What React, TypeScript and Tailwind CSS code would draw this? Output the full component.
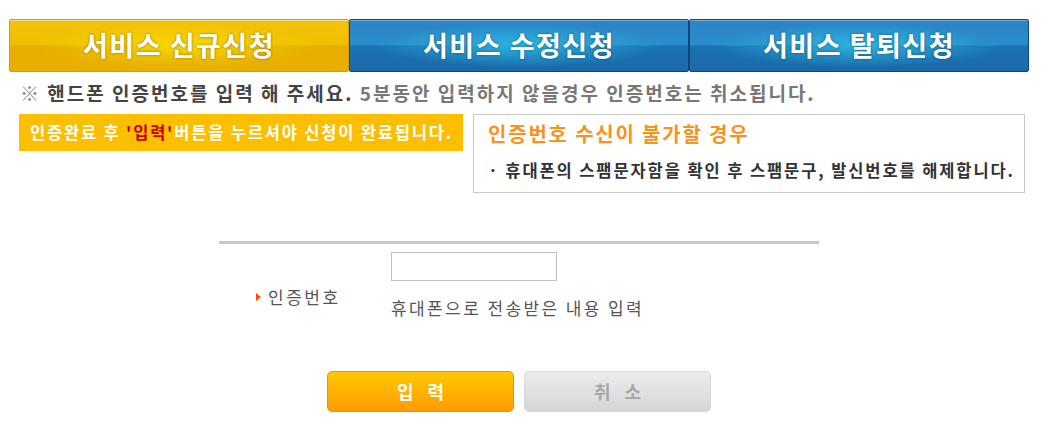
import React from "react";

const font = { fontFamily: '"Noto Sans CJK KR", "Noto Sans", sans-serif' };

type TabProps = {
  label: string;
  active?: boolean;
};

const Tab = ({ label, active }: TabProps) => {
  return (
    <div
      className={
        active
          ? "w-[340px] h-[53px] flex items-center justify-center border border-[#d99a00] rounded-[2px] bg-[radial-gradient(ellipse_at_center,#f8d800_0%,rgba(248,216,0,0)_60%),linear-gradient(to_bottom,#f4c20a_0%,#f0bf00_48%,#e6ac00_52%,#e9b000_100%)] shadow-[inset_0_1px_0_rgba(255,255,255,0.5)]"
          : "w-[340px] h-[53px] flex items-center justify-center border border-[#12467a] rounded-[2px] bg-[radial-gradient(ellipse_at_center,#2ab4df_0%,rgba(42,180,223,0)_60%),linear-gradient(to_bottom,#2b84c6_0%,#2a8ccb_48%,#1a72b2_52%,#1b6aa8_100%)] shadow-[inset_0_1px_0_rgba(255,255,255,0.35)]"
      }
    >
      <span className="text-white text-[27px] font-bold tracking-[1.5px] [text-shadow:0_0_3px_rgba(0,0,0,0.4)]">
        {label}
      </span>
    </div>
  );
};

export default function App() {
  return (
    <div className="w-[1041px] h-[433px] bg-white pt-[19px]" style={font}>
      <div className="flex pl-[9px]">
        <Tab label="서비스 신규신청" active />
        <Tab label="서비스 수정신청" />
        <Tab label="서비스 탈퇴신청" />
      </div>

      <p className="mt-[10px] pl-[20px] text-[19px] font-bold tracking-[2px] leading-[22px] whitespace-nowrap">
        <span className="text-[#888]">※ </span>
        <span className="text-[#444]">핸드폰 인증번호를 입력 해 주세요.</span>{" "}
        <span className="text-[#777]">5분동안 입력하지 않을경우 인증번호는 취소됩니다.</span>
      </p>

      <div className="flex items-start gap-[10px] pl-[19px] mt-[10px]">
        <div className="w-[444px] h-[37px] bg-[#fcbf00] flex items-center pl-[11px] text-white text-[16.5px] font-bold tracking-[1.8px] whitespace-nowrap">
          인증완료 후&nbsp;<span className="text-[#c80000]">'입력'</span>버튼을 누르셔야 신청이 완료됩니다.
        </div>
        <div className="w-[552px] h-[79px] border border-[#c8c8c8] pl-[14px] pt-[5px]">
          <div className="text-[#f7931e] text-[20px] font-bold tracking-[1.8px] leading-[28px]">
            인증번호 수신이 불가할 경우
          </div>
          <div className="mt-[12px] text-[#333] text-[16.5px] font-bold tracking-[1.9px] leading-[20px] whitespace-nowrap">
            · 휴대폰의 스팸문자함을 확인 후 스팸문구, 발신번호를 해제합니다.
          </div>
        </div>
      </div>

      <div className="w-[600px] ml-[219px] mt-[48px] border-t-[3px] border-[#c8c8c8]">
        <div className="flex h-[104px]">
          <div className="w-[172px] flex items-center pl-[37px] pt-[1px]">
            <svg width="5" height="8" viewBox="0 0 5 8" className="mr-[7px]">
              <polygon points="0,0 5,4 0,8" fill="#ff4e00" />
            </svg>
            <span className="text-[17px] tracking-[2.5px] text-[#555]">인증번호</span>
          </div>
          <div className="pt-[8px]">
            <div className="w-[166px] h-[29px] border border-[#c0c0c0]" />
            <div className="mt-[16px] text-[17px] tracking-[2.4px] text-[#555] leading-[22px] whitespace-nowrap">
              휴대폰으로 전송받은 내용 입력
            </div>
          </div>
        </div>
      </div>

      <div className="flex gap-[10px] pl-[327px] mt-[23px]">
        <button className="w-[187px] h-[41px] rounded-[5px] border border-[#f09000] bg-[linear-gradient(to_bottom,#ffc800,#ff9c00)] text-white text-[18px] font-bold tracking-[14px] pl-[14px]">
          입력
        </button>
        <button className="w-[187px] h-[41px] rounded-[5px] border border-[#d8d8d8] bg-[linear-gradient(to_bottom,#ececec,#d6d6d6)] text-[#a8a8a8] text-[18px] font-bold tracking-[14px] pl-[14px]">
          취소
        </button>
      </div>
    </div>
  );
}
